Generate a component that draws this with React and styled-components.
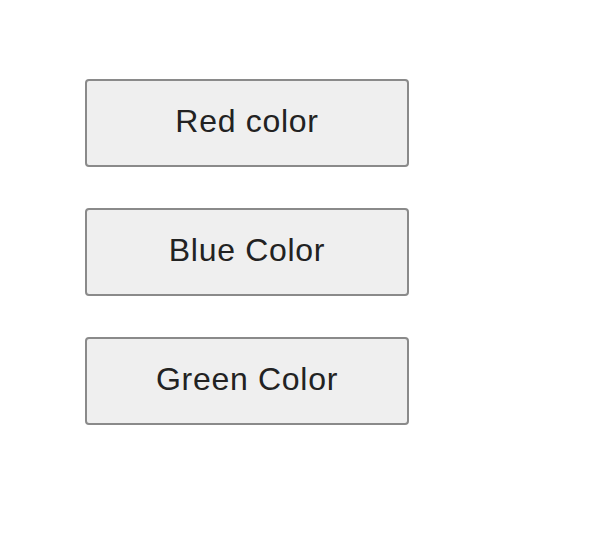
import React from 'react'
import styled, { createGlobalStyle } from 'styled-components'

const GlobalStyle = createGlobalStyle`
  body {
    margin: 0;
    background: #fff;
    font-family: "Liberation Sans", Arial, sans-serif;
  }
`

const Page = styled.div`
  display: flex;
  flex-direction: column;
  gap: 41px;
  padding: 79px 0 0 85px;
`

const ColorButton = styled.button`
  width: 324px;
  height: 88px;
  box-sizing: border-box;
  background: #efefef;
  border: 2px solid #8a8a8a;
  border-radius: 4px;
  font-family: "Liberation Sans", Arial, sans-serif;
  font-size: 32px;
  letter-spacing: 0.7px;
  color: #222;
  padding: 0 0 3px;
`

const buttons = ['Red color', 'Blue Color', 'Green Color']

const App = () => {
  return (
    <>
      <GlobalStyle />
      <Page>
        {buttons.map(label => (
          <ColorButton key={label}>{label}</ColorButton>
        ))}
      </Page>
    </>
  )
}

export default App
